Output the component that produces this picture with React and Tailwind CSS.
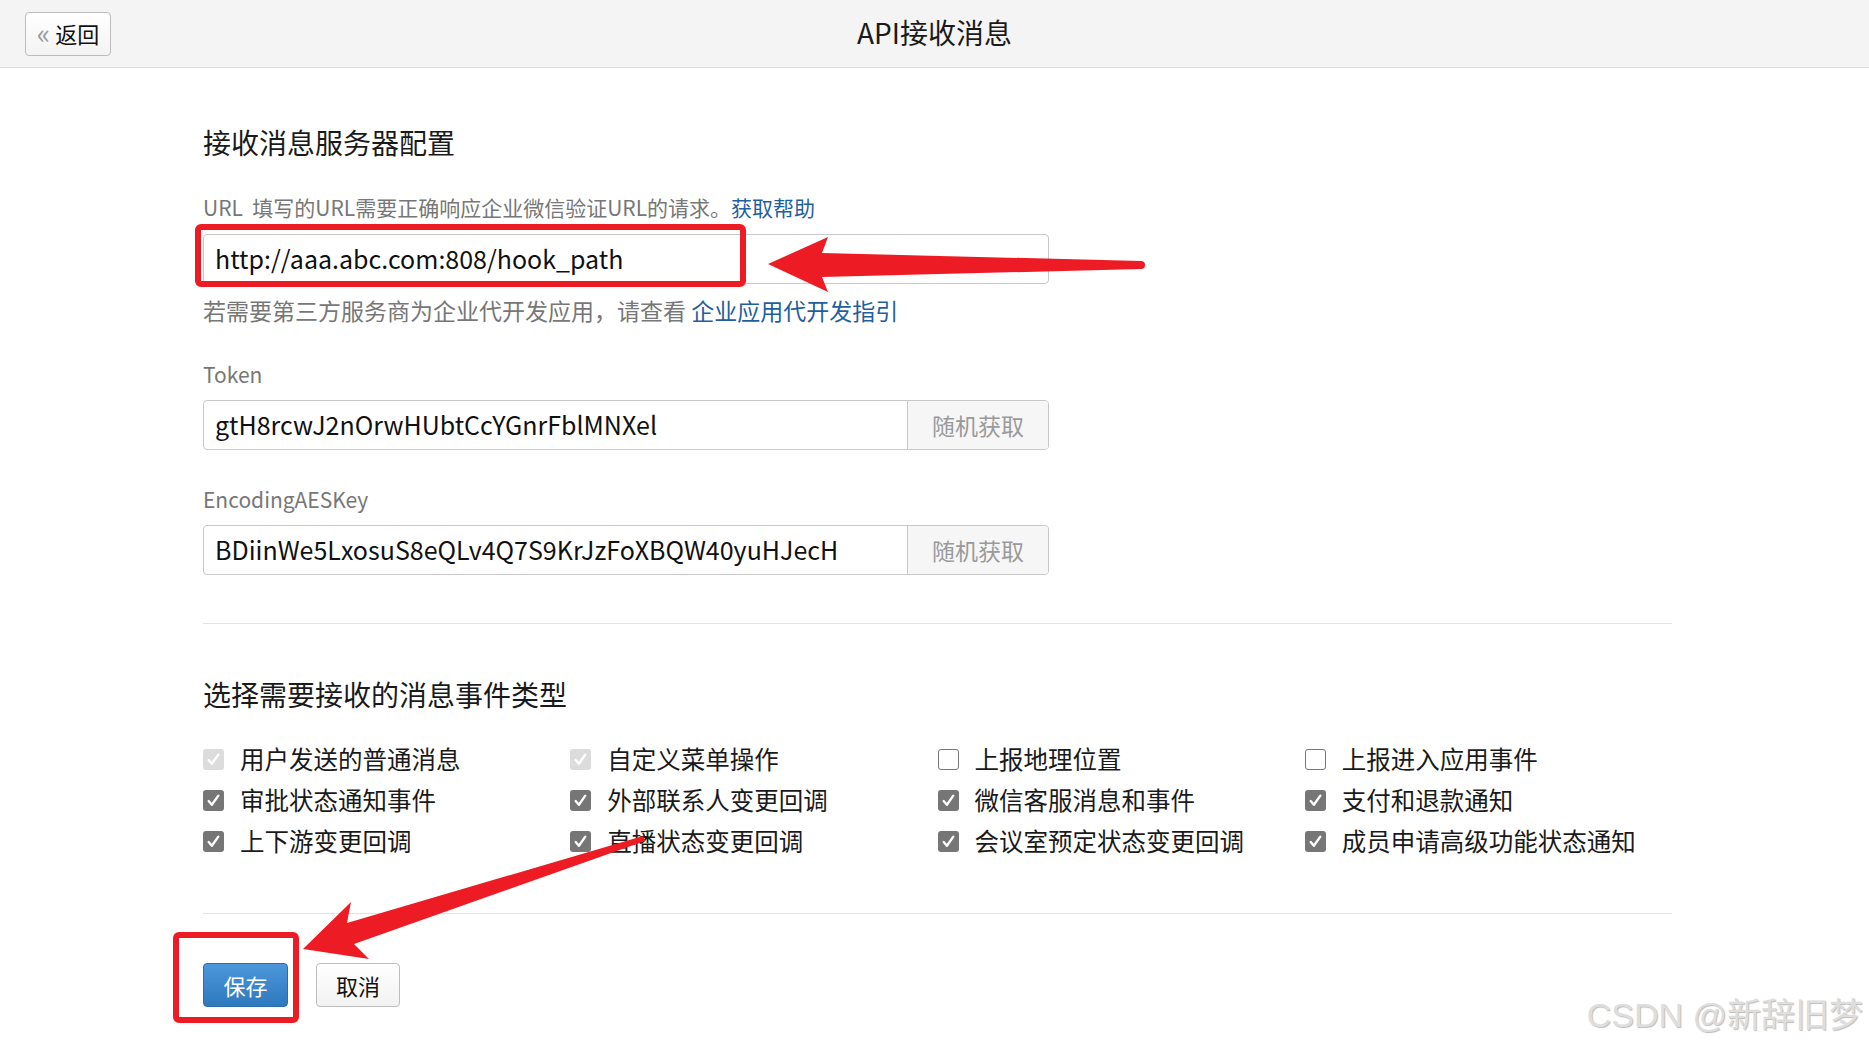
import React from "react";

const events = [
  { label: "用户发送的普通消息", state: "disabled" },
  { label: "自定义菜单操作", state: "disabled" },
  { label: "上报地理位置", state: "off" },
  { label: "上报进入应用事件", state: "off" },
  { label: "审批状态通知事件", state: "on" },
  { label: "外部联系人变更回调", state: "on" },
  { label: "微信客服消息和事件", state: "on" },
  { label: "支付和退款通知", state: "on" },
  { label: "上下游变更回调", state: "on" },
  { label: "直播状态变更回调", state: "on" },
  { label: "会议室预定状态变更回调", state: "on" },
  { label: "成员申请高级功能状态通知", state: "on" },
];

const Check = ({ state }) => {
  if (state === "off") {
    return <span className="w-[21px] h-[21px] rounded-[3px] border-[1.5px] border-[#777] bg-white shrink-0" />;
  }
  const bg = state === "disabled" ? "bg-[#dcdcdc]" : "bg-[#767676]";
  return (
    <span className={`w-[21px] h-[21px] rounded-[3px] ${bg} shrink-0 flex items-center justify-center`}>
      <svg width="15" height="15" viewBox="0 0 14 14">
        <path d="M2.5 7.5 L5.5 11 L11.5 2.5" fill="none" stroke="white" strokeWidth="2.2" strokeLinecap="round" strokeLinejoin="round" />
      </svg>
    </span>
  );
};

const Field = ({ value, withButton }) => (
  <div className="flex w-[846px] h-[50px] border border-[#c8c8c8] rounded-[4px] bg-white overflow-hidden">
    <div className="flex-1 flex items-center pl-[11px] text-[25px] text-[#111]">{value}</div>
    {withButton && (
      <div className="w-[141px] flex items-center justify-center border-l border-[#c8c8c8] bg-[#f6f6f6] text-[23px] text-[#9a9a9a]">
        随机获取
      </div>
    )}
  </div>
);

export default function App() {
  return (
    <div className="relative w-full h-[1048px] overflow-hidden bg-white font-['Noto_Sans_CJK_SC','Noto_Sans',sans-serif] text-[#222]">
      {/* Header */}
      <div className="h-[68px] bg-[#f4f4f4] border-b border-[#dcdcdc] grid grid-cols-[1fr_auto_1fr] items-center">
        <div className="pl-[25px]">
          <button className="h-[44px] w-[86px] flex items-center justify-center gap-[5px] border border-[#bcbcbc] rounded-[4px] bg-gradient-to-b from-white to-[#f3f3f3] text-[22px] text-[#111]">
            <span className="text-[#9a9a9a] text-[28px] leading-none -mt-[4px]">«</span>
            <span>返回</span>
          </button>
        </div>
        <div className="text-[28px] text-[#1a1a1a] leading-none -mt-[3px]">API接收消息</div>
        <div />
      </div>

      {/* Main */}
      <div className="pl-[203px] pr-[197px] pt-[54px]">
        <h2 className="text-[28px] leading-[40px] text-[#1a1a1a]">接收消息服务器配置</h2>

        <div className="mt-[30px] leading-[30px] text-[21px] text-[#777]">
          URL&nbsp;&nbsp;填写的URL需要正确响应企业微信验证URL的请求。<span className="text-[#1f5f9e]">获取帮助</span>
        </div>
        <div className="mt-[12px]">
          <Field value="http://aaa.abc.com:808/hook_path" />
        </div>
        <div className="mt-[11px] leading-[30px] text-[23px] text-[#777]">
          若需要第三方服务商为企业代开发应用，请查看 <span className="text-[#1f5f9e]">企业应用代开发指引</span>
        </div>

        <div className="mt-[34px] leading-[30px] text-[21px] text-[#777]">Token</div>
        <div className="mt-[11px]">
          <Field value="gtH8rcwJ2nOrwHUbtCcYGnrFblMNXel" withButton />
        </div>

        <div className="mt-[34px] leading-[30px] text-[21px] text-[#777]">EncodingAESKey</div>
        <div className="mt-[11px]">
          <Field value="BDiinWe5LxosuS8eQLv4Q7S9KrJzFoXBQW40yuHJecH" withButton />
        </div>

        <div className="mt-[48px] border-t border-[#e3e3e3]" />

        <h2 className="mt-[50px] text-[28px] leading-[40px] text-[#1a1a1a]">选择需要接收的消息事件类型</h2>

        <div className="mt-[25px] grid grid-cols-4">
          {events.map((e) => (
            <div key={e.label} className="h-[41px] flex items-center gap-[16px]">
              <Check state={e.state} />
              <span className="text-[24.5px] text-[#1a1a1a]">{e.label}</span>
            </div>
          ))}
        </div>

        <div className="mt-[51px] border-t border-[#e3e3e3]" />

        <div className="mt-[49px] flex gap-[28px]">
          <button className="w-[85px] h-[44px] rounded-[4px] border border-[#2c6eac] bg-gradient-to-b from-[#4c97db] to-[#2e78bd] text-white text-[22px]">
            保存
          </button>
          <button className="w-[84px] h-[44px] rounded-[4px] border border-[#bdbdbd] bg-gradient-to-b from-white to-[#f2f2f2] text-[#111] text-[22px]">
            取消
          </button>
        </div>
      </div>

      {/* Watermark */}
      <div className="absolute right-[6px] bottom-[16px] text-[34px] leading-none text-[#dedede] font-['Liberation_Sans','Noto_Sans_CJK_SC',sans-serif] [text-shadow:1px_1px_1px_#bdbdbd]">
        CSDN @新辞旧梦
      </div>

      {/* Annotations */}
      <svg className="absolute inset-0 pointer-events-none" width="1869" height="1048" viewBox="0 0 1869 1048">
        <rect x="198" y="227" width="545" height="57" rx="3" fill="none" stroke="#ed1c24" strokeWidth="6" />
        <rect x="176" y="935" width="120" height="85" rx="3" fill="none" stroke="#ed1c24" strokeWidth="6" />
        <polygon
          points="768,264 828,237 822,253 1141,261 1141,269 822,277 828,292"
          fill="#ed1c24"
        />
        <circle cx="1141" cy="265" r="4" fill="#ed1c24" />
        <polygon
          points="303,949 351,902 347,923 643,836 645,841 354,944 369,959"
          fill="#ed1c24"
        />
      </svg>
    </div>
  );
}
